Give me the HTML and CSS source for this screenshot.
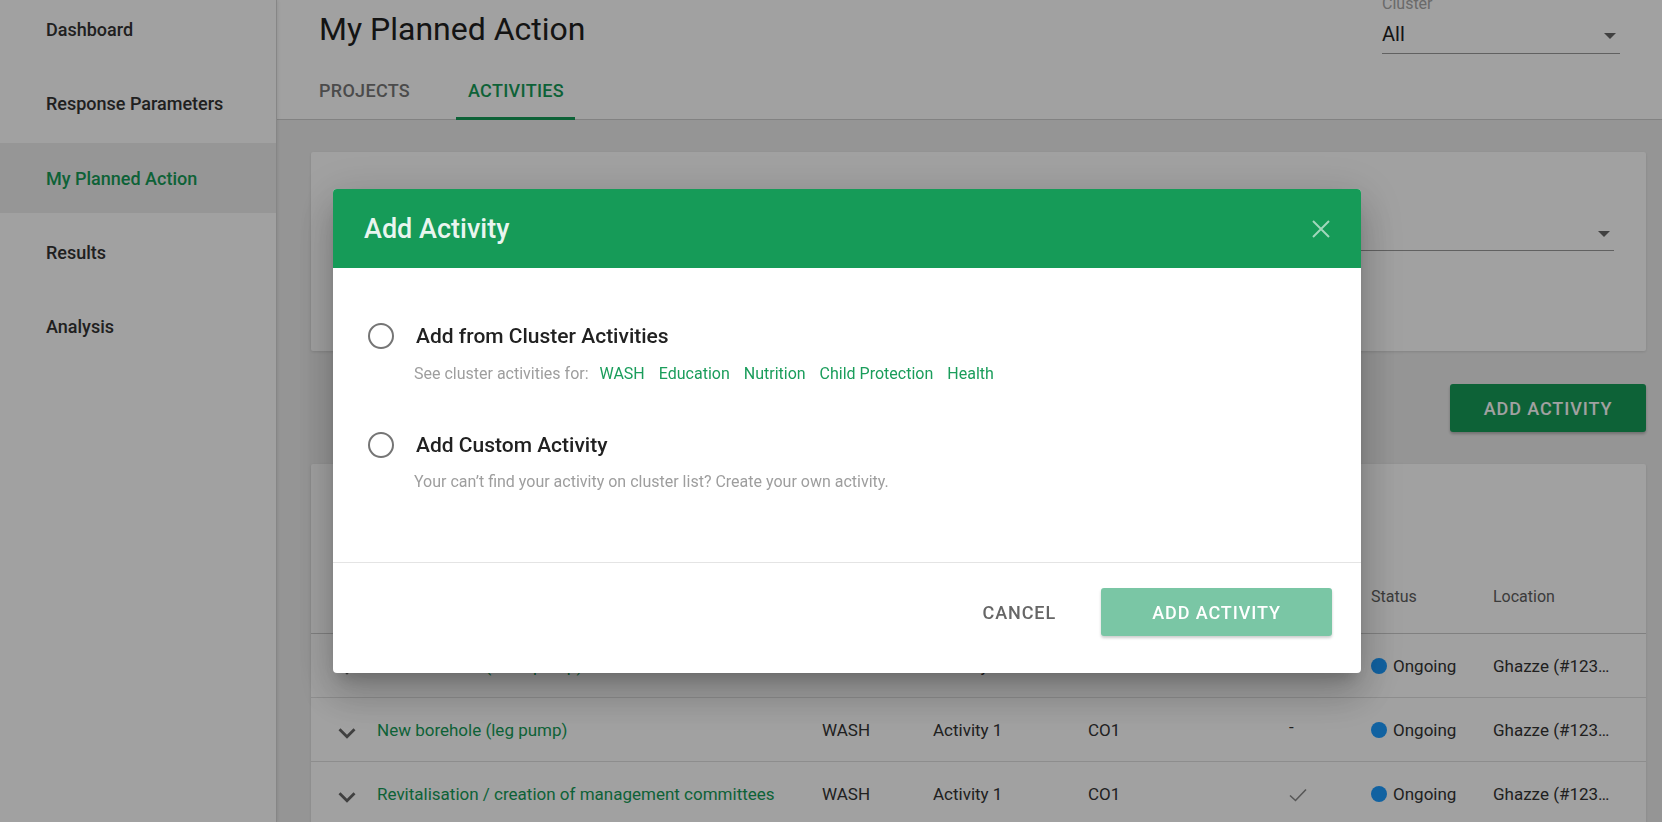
FILE: index.html
```html
<!DOCTYPE html>
<html lang="en">
<head>
<meta charset="utf-8">
<title>My Planned Action</title>
<link rel="stylesheet" href="styles.css">
</head>
<body>
<div class="app">
  <aside class="sidebar">
    <nav class="nav">
      <a class="nav-item">Dashboard</a>
      <a class="nav-item">Response Parameters</a>
      <a class="nav-item nav-item-active">My Planned Action</a>
      <a class="nav-item">Results</a>
      <a class="nav-item">Analysis</a>
    </nav>
  </aside>
  <main class="main">
    <header class="page-header">
      <div class="header-left">
        <h1 class="page-title">My Planned Action</h1>
        <div class="tabs">
          <div class="tab">Projects</div>
          <div class="tab tab-active">Activities</div>
        </div>
      </div>
      <div class="field field-cluster">
        <div class="field-label">Cluster</div>
        <div class="field-value"><span>All</span><span class="caret"></span></div>
      </div>
    </header>

    <section class="content">
      <div class="card filters">
        <div class="field">
          <div class="field-label">Partner</div>
          <div class="field-value"><span>All</span><span class="caret"></span></div>
        </div>
        <div class="field">
          <div class="field-label">Project</div>
          <div class="field-value"><span>All</span><span class="caret"></span></div>
        </div>
        <div class="field">
          <div class="field-label">Status</div>
          <div class="field-value"><span>All</span><span class="caret"></span></div>
        </div>
      </div>

      <div class="actions">
        <button class="btn btn-primary">Add Activity</button>
      </div>

      <div class="card table-card">
        <h2 class="results">1-10 of 12 results to show</h2>
        <div class="table">
          <div class="trow thead">
            <div></div>
            <div>Activity</div>
            <div>Cluster</div>
            <div>Activity</div>
            <div>Objective</div>
            <div></div>
            <div>Status</div>
            <div>Location</div>
          </div>
          <div class="trow">
            <div class="chev"><svg viewBox="0 0 24 24" width="34" height="34"><path d="M7.41 8.59L12 13.17l4.59-4.58L18 10l-6 6-6-6 1.41-1.41z"/></svg></div>
            <div class="name">New borehole (hand pump)</div>
            <div>WASH</div>
            <div>Activity 1</div>
            <div>CO1</div>
            <div class="dash">-</div>
            <div class="status"><span class="dot"></span>Ongoing</div>
            <div>Ghazze (#123…</div>
          </div>
          <div class="trow">
            <div class="chev"><svg viewBox="0 0 24 24" width="34" height="34"><path d="M7.41 8.59L12 13.17l4.59-4.58L18 10l-6 6-6-6 1.41-1.41z"/></svg></div>
            <div class="name">New borehole (leg pump)</div>
            <div>WASH</div>
            <div>Activity 1</div>
            <div>CO1</div>
            <div class="dash">-</div>
            <div class="status"><span class="dot"></span>Ongoing</div>
            <div>Ghazze (#123…</div>
          </div>
          <div class="trow">
            <div class="chev"><svg viewBox="0 0 24 24" width="34" height="34"><path d="M7.41 8.59L12 13.17l4.59-4.58L18 10l-6 6-6-6 1.41-1.41z"/></svg></div>
            <div class="name">Revitalisation / creation of management committees</div>
            <div>WASH</div>
            <div>Activity 1</div>
            <div>CO1</div>
            <div class="check"><svg viewBox="0 0 18 14" width="18" height="14"><polyline points="1,7.5 6.5,12.5 17,1.5"/></svg></div>
            <div class="status"><span class="dot"></span>Ongoing</div>
            <div>Ghazze (#123…</div>
          </div>
        </div>
      </div>
    </section>
  </main>
</div>

<div class="backdrop">
  <div class="dialog">
    <div class="dialog-header">
      <h2 class="dialog-title">Add Activity</h2>
      <svg class="close" viewBox="0 0 18 18" width="18" height="18"><path d="M1 1L17 17M17 1L1 17"/></svg>
    </div>
    <div class="dialog-body">
      <div class="option">
        <div class="opt-head"><span class="radio"></span><span class="opt-label">Add from Cluster Activities</span></div>
        <div class="opt-sub">
          <span>See cluster activities for:</span>
          <a class="link link-first">WASH</a>
          <a class="link">Education</a>
          <a class="link">Nutrition</a>
          <a class="link">Child Protection</a>
          <a class="link">Health</a>
        </div>
      </div>
      <div class="option">
        <div class="opt-head"><span class="radio"></span><span class="opt-label">Add Custom Activity</span></div>
        <div class="opt-sub"><span>Your can’t find your activity on cluster list? Create your own activity.</span></div>
      </div>
    </div>
    <div class="dialog-footer">
      <button class="btn btn-text">Cancel</button>
      <button class="btn btn-light">Add Activity</button>
    </div>
  </div>
</div>
</body>
</html>
```

FILE: styles.css
```css
* { box-sizing: border-box; }

html, body {
  margin: 0;
  padding: 0;
  width: 1662px;
  height: 822px;
  overflow: hidden;
  font-family: Roboto, "Noto Sans", "Liberation Sans", sans-serif;
  color: #333;
  background: #ededed;
}

h1, h2 { margin: 0; font-weight: inherit; }

.app {
  display: flex;
  height: 822px;
}

/* Sidebar */
.sidebar {
  width: 277px;
  flex: none;
  background: #fff;
  border-right: 1px solid #d4d4d4;
  box-shadow: 1px 0 3px rgba(0,0,0,0.08);
  position: relative;
  z-index: 1;
}
.nav {
  display: flex;
  flex-direction: column;
  gap: 4.4px;
  margin-top: -5.7px;
}
.nav-item {
  height: 70px;
  display: flex;
  align-items: center;
  padding-left: 46px;
  font-size: 18px;
  font-weight: 500;
  color: #333;
}
.nav-item-active {
  background: #eeeeee;
  color: #169b58;
}

/* Main */
.main {
  flex: 1;
  min-width: 0;
  background: #ededed;
}
.page-header {
  height: 120px;
  background: #fff;
  border-bottom: 1px solid #cfcfcf;
  display: flex;
  justify-content: space-between;
  align-items: flex-start;
  padding: 0 42px;
}
.page-title {
  margin-top: 9px;
  font-size: 32px;
  line-height: 40px;
  font-weight: 400;
  color: #212121;
}
.tabs {
  display: flex;
  gap: 35px;
  margin-top: 11px;
  margin-left: -12px;
  margin-bottom: -1px;
}
.tab {
  height: 60px;
  display: flex;
  align-items: center;
  padding: 3px 11px 0 12px;
  font-size: 18px;
  font-weight: 500;
  letter-spacing: 0.3px;
  text-transform: uppercase;
  color: #777;
  border-bottom: 3px solid transparent;
}
.tab-active {
  color: #169b58;
  border-bottom-color: #169b58;
}

/* Fields */
.field-cluster {
  width: 238px;
  margin-top: -6.5px;
}
.field-label {
  font-size: 16px;
  line-height: 20px;
  color: #a8a8a8;
  margin-bottom: 6px;
}
.field-value {
  display: flex;
  justify-content: space-between;
  align-items: center;
  font-size: 20px;
  line-height: 28px;
  color: #212121;
  padding-bottom: 5px;
  border-bottom: 1px solid #9a9a9a;
}
.caret {
  width: 0;
  height: 0;
  border-left: 6px solid transparent;
  border-right: 6px solid transparent;
  border-top: 6px solid #666;
  margin-right: 4px;
  margin-top: 4px;
}

/* Content */
.content {
  padding: 32px 16px 0 34px;
}
.card {
  background: #fff;
  border-radius: 2px;
  box-shadow: 0 1px 3px rgba(0,0,0,0.12);
}
.filters {
  height: 199px;
  padding: 42px 32px 0 32px;
  display: grid;
  grid-template-columns: repeat(3, 1fr);
  column-gap: 32px;
  align-items: start;
}
.filters .field-label { margin-bottom: 4px; }
.filters .field-value { padding-bottom: 4px; }

.actions {
  display: flex;
  justify-content: flex-end;
  margin-top: 33px;
}

.btn {
  font-family: inherit;
  border: 0;
  background: none;
  font-size: 18px;
  font-weight: 500;
  letter-spacing: 0.9px;
  text-transform: uppercase;
  cursor: pointer;
}
.btn-primary {
  width: 196px;
  height: 48px;
  background: #169b58;
  color: #fff;
  border-radius: 3px;
  box-shadow: 0 2px 3px rgba(0,0,0,0.25);
}

.table-card {
  margin-top: 32px;
  padding: 40px 0 0 19px;
  height: 400px;
}
.results {
  font-size: 24px;
  line-height: 32px;
  color: #212121;
  padding-left: 6px;
}
.table {
  margin-top: 24px;
}
.trow {
  display: grid;
  grid-template-columns: 47px 445px 111px 155px 201px 82px 122px 1fr;
  align-items: center;
  height: 64px;
  border-bottom: 1px solid #e0e0e0;
  font-size: 17px;
  color: #333;
  margin-left: -19px;
  padding-left: 19px;
}
.thead {
  height: 74px;
  font-size: 16px;
  color: #5e5e5e;
  border-bottom-color: #cbcbcb;
}
.chev {
  display: flex;
  align-items: center;
  padding-top: 6px;
}
.chev svg { fill: #666; }
.name { color: #169b58; }
.dash { padding-bottom: 6px; }
.check { display: flex; align-items: center; padding-top: 2px; }
.check svg { fill: none; stroke: #8a8a8a; stroke-width: 1.6; }
.status {
  display: flex;
  align-items: center;
  gap: 6px;
}
.dot {
  width: 16px;
  height: 16px;
  border-radius: 50%;
  background: #1b9bff;
  flex: none;
}

/* Modal */
.backdrop {
  position: fixed;
  inset: 0;
  background: rgba(0,0,0,0.37);
  z-index: 10;
  padding: 189px 0 0 333px;
}
.dialog {
  width: 1028px;
  background: #fff;
  border-radius: 4px;
  overflow: hidden;
  box-shadow: 0 11px 15px -7px rgba(0,0,0,0.2), 0 24px 38px 3px rgba(0,0,0,0.14), 0 9px 46px 8px rgba(0,0,0,0.12);
}
.dialog-header {
  height: 79px;
  background: #169b58;
  display: flex;
  align-items: center;
  justify-content: space-between;
  padding: 0 31px;
}
.dialog-title {
  font-size: 27px;
  font-weight: 500;
  color: rgba(255,255,255,0.92);
}
.close {
  stroke: rgba(255,255,255,0.6);
  stroke-width: 2;
  fill: none;
}
.dialog-body {
  padding: 55px 35px 70px;
}
.option + .option { margin-top: 48px; }
.opt-head {
  display: flex;
  align-items: center;
  gap: 22px;
  height: 26px;
}
.radio {
  width: 26px;
  height: 26px;
  border-radius: 50%;
  border: 2.5px solid #757575;
  flex: none;
}
.opt-label {
  font-size: 21px;
  font-weight: 500;
  color: #212121;
  line-height: 26px;
}
.opt-sub {
  display: flex;
  gap: 14px;
  margin: 14.5px 0 0 46px;
  font-size: 16px;
  line-height: 20px;
  color: #9e9e9e;
}
.link { color: #1a9d5b; }
.link-first { margin-left: -3px; }

.dialog-footer {
  border-top: 1px solid #e4e4e4;
  display: flex;
  justify-content: flex-end;
  align-items: center;
  padding: 25px 29px 37px;
}
.btn-text {
  color: #666;
  padding: 0 16px;
  height: 48px;
  margin-right: 29px;
}
.btn-light {
  width: 231px;
  height: 48px;
  background: #7ac6a5;
  color: #fff;
  border-radius: 3px;
  box-shadow: 0 2px 3px rgba(0,0,0,0.2);
}
```
